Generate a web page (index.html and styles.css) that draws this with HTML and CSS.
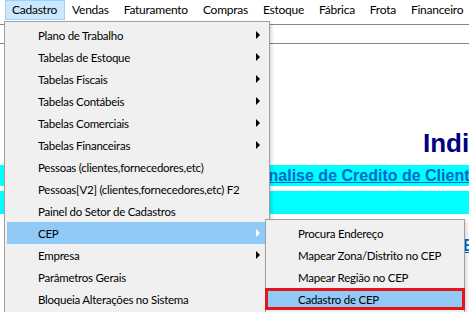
FILE: index.html
```html
<!DOCTYPE html>
<html lang="pt-BR">
  <head>
    <meta charset="UTF-8" />
    <title>Cadastro - CEP</title>
    <link rel="stylesheet" href="styles.css">
  </head>
  <body>
    <div class="menubar">
      <span class="menubar-item active">Cadastro</span>
      <span class="menubar-item">Vendas</span>
      <span class="menubar-item">Faturamento</span>
      <span class="menubar-item">Compras</span>
      <span class="menubar-item">Estoque</span>
      <span class="menubar-item">Fábrica</span>
      <span class="menubar-item">Frota</span>
      <span class="menubar-item">Financeiro</span>
    </div>
    <div class="toolbar"></div>

    <div class="page">
      <h1 class="title">Indicadores Gerenciais</h1>
      <div class="band">
        <div class="band-left"><a href="#">Cadastro</a></div>
        <a class="band-link" href="#">Analise de Credito de Clientes</a>
      </div>
      <div class="band band-empty"></div>
      <div class="links-row"><a href="#">Estatisticas</a></div>
    </div>

    <!-- menu Cadastro aberto -->
    <ul class="dropdown">
      <li class="menu-item sub">Plano de Trabalho</li>
      <li class="menu-item sub">Tabelas de Estoque</li>
      <li class="menu-item sub">Tabelas Fiscais</li>
      <li class="menu-item sub">Tabelas Contábeis</li>
      <li class="menu-item sub">Tabelas Comerciais</li>
      <li class="menu-item sub">Tabelas Financeiras</li>
      <li class="menu-item">Pessoas (clientes,fornecedores,etc)</li>
      <li class="menu-item">Pessoas[V2] (clientes,fornecedores,etc) F2</li>
      <li class="menu-item">Painel do Setor de Cadastros</li>
      <li class="menu-item sub selected">CEP</li>
      <li class="menu-item sub">Empresa</li>
      <li class="menu-item">Parâmetros Gerais</li>
      <li class="menu-item">Bloqueia Alterações no Sistema</li>
    </ul>

    <!-- submenu CEP -->
    <ul class="submenu">
      <li class="menu-item">Procura Endereço</li>
      <li class="menu-item">Mapear Zona/Distrito no CEP</li>
      <li class="menu-item">Mapear Região no CEP</li>
      <li class="menu-item selected marked">Cadastro de CEP</li>
    </ul>
  </body>
</html>
```

FILE: styles.css
```css
body {
  margin: 0;
  background: #fff;
  overflow: hidden;
  font-family: Lato, "Noto Sans", sans-serif;
  font-size: 11.5px;
  letter-spacing: -0.25px;
  color: #000;
}

.menubar {
  display: flex;
  height: 21px;
  padding-left: 5px;
  background: #fff;
  white-space: nowrap;
}

.menubar-item {
  box-sizing: border-box;
  height: 20px;
  line-height: 18px;
  padding: 0 7px 0 6px;
  border: 1px solid transparent;
  font-size: 12px;
}

.menubar-item.active {
  background: #cce8ff;
  border-color: #99d1ff;
}

.toolbar {
  height: 18px;
  margin-top: 3px;
  border-top: 1px solid #858585;
  border-bottom: 1px solid #858585;
}

.page {
  white-space: nowrap;
  font-family: "Liberation Sans", Arial, sans-serif;
  letter-spacing: 0;
}

.title {
  margin: 84px 0 0;
  padding-left: 423px;
  font-size: 26px;
  line-height: 30px;
  color: #000080;
}

.page a {
  color: #0066cc;
  font-weight: bold;
  font-size: 16px;
}

.band {
  display: flex;
  height: 21px;
  line-height: 21px;
  margin-top: 7px;
  background: #00ffff;
}

.band-left {
  display: flex;
  justify-content: flex-end;
  width: 5px;
  overflow: hidden;
}

.band-link {
  margin-left: 257px;
}

.band-empty {
  height: 23px;
  margin-top: 5px;
}

.links-row {
  margin-top: 21px;
  padding-left: 463px;
  line-height: 21px;
}

/* menus */
.dropdown,
.submenu {
  position: absolute;
  margin: 0;
  padding: 2px;
  list-style: none;
  background: #f0f0f0;
  border: 1px solid #a0a0a0;
  box-shadow: 2px 2px 3px rgba(0, 0, 0, 0.15);
}

.dropdown {
  left: 4px;
  top: 21px;
  width: 260px;
}

.submenu {
  left: 265px;
  top: 219px;
  width: 194px;
}

.menu-item {
  display: flex;
  align-items: center;
  box-sizing: border-box;
  height: 22px;
  padding-left: 31px;
  white-space: nowrap;
}

.submenu .menu-item {
  padding-left: 30px;
}

.menu-item.sub::after {
  content: "";
  margin-left: auto;
  margin-right: 7px;
  border-left: 4px solid #000;
  border-top: 4px solid transparent;
  border-bottom: 4px solid transparent;
}

.menu-item.selected {
  background: #91c9f7;
}

.menu-item.sub.selected::after {
  border-left-color: #fff;
}

.submenu .menu-item.marked {
  margin: 0 -3px;
  border: 3px solid #e8141b;
}
```
